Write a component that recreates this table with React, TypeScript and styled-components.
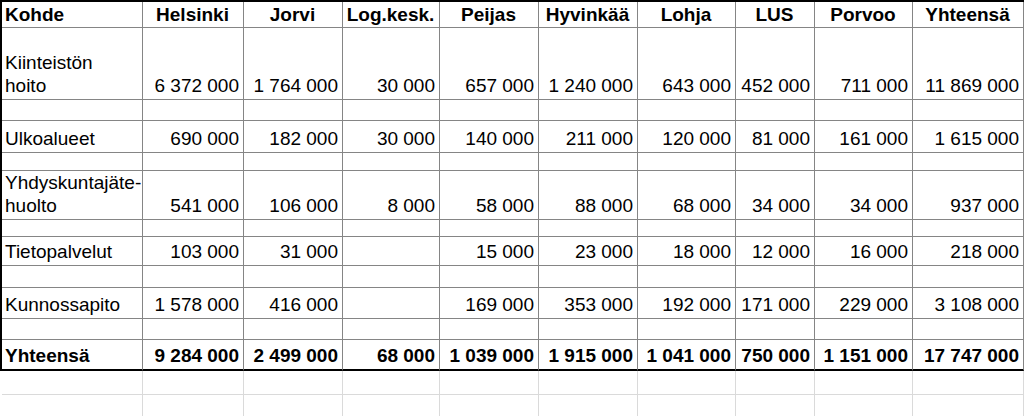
import React from 'react';
import styled, { createGlobalStyle } from 'styled-components';

const GlobalStyle = createGlobalStyle`
  html, body {
    margin: 0;
    padding: 0;
    background: #fff;
  }
  body {
    font-family: "Liberation Sans", Arial, sans-serif;
    color: #000;
  }
`;

// column widths, measured between the grid lines of the sheet
const COLS = '141px 101px 99px 97px 99px 99px 98px 79px 98px 111px';

const Page = styled.div`
  width: 1024px;
  height: 416px;
  overflow: hidden;
`;

const Sheet = styled.div`
  border-top: 2px solid #000;
  border-left: 2px solid #000;
`;

const Below = styled.div`
  padding-left: 2px;
`;

const Row = styled.div<{ $h: number; $total?: boolean; $faint?: boolean }>`
  display: grid;
  grid-template-columns: ${COLS};
  height: ${(p) => p.$h}px;
  font-weight: ${(p) => (p.$total ? 700 : 400)};
  & > div {
    border-bottom: ${(p) =>
      p.$total ? '2px solid #000' : p.$faint ? '1px solid #dadada' : '1px solid #858585'};
    border-right: 1px solid ${(p) => (p.$faint ? '#dadada' : '#858585')};
  }
`;

const Cell = styled.div<{ $align?: 'left' | 'right' | 'center' }>`
  box-sizing: border-box;
  display: flex;
  align-items: flex-end;
  justify-content: ${(p) =>
    p.$align === 'right' ? 'flex-end' : p.$align === 'center' ? 'center' : 'flex-start'};
  text-align: ${(p) => p.$align || 'left'};
  padding: 0 4px 2px 3px;
  font-size: 19px;
  line-height: 23px;
  white-space: pre;
  overflow: visible;
`;

const HeadCell = styled(Cell)`
  font-weight: 700;
  padding-bottom: 1px;
`;

const headers = ['Kohde', 'Helsinki', 'Jorvi', 'Log.kesk.', 'Peijas', 'Hyvinkää', 'Lohja', 'LUS', 'Porvoo', 'Yhteensä'];

const rows: { label: string; values: string[]; h: number; spacer: number }[] = [
  {
    label: 'Kiinteistön\nhoito',
    values: ['6 372 000', '1 764 000', '30 000', '657 000', '1 240 000', '643 000', '452 000', '711 000', '11 869 000'],
    h: 72,
    spacer: 21,
  },
  {
    label: 'Ulkoalueet',
    values: ['690 000', '182 000', '30 000', '140 000', '211 000', '120 000', '81 000', '161 000', '1 615 000'],
    h: 32,
    spacer: 18,
  },
  {
    label: 'Yhdyskuntajäte-\nhuolto',
    values: ['541 000', '106 000', '8 000', '58 000', '88 000', '68 000', '34 000', '34 000', '937 000'],
    h: 48,
    spacer: 18,
  },
  {
    label: 'Tietopalvelut',
    values: ['103 000', '31 000', '', '15 000', '23 000', '18 000', '12 000', '16 000', '218 000'],
    h: 29,
    spacer: 22,
  },
  {
    label: 'Kunnossapito',
    values: ['1 578 000', '416 000', '', '169 000', '353 000', '192 000', '171 000', '229 000', '3 108 000'],
    h: 31,
    spacer: 21,
  },
];

const total = ['9 284 000', '2 499 000', '68 000', '1 039 000', '1 915 000', '1 041 000', '750 000', '1 151 000', '17 747 000'];

const EmptyCells = () => (
  <>
    {headers.map((h) => (
      <Cell key={h} />
    ))}
  </>
);

const App: React.FC = () => {
  return (
    <Page>
      <GlobalStyle />
      <Sheet>
        <Row $h={26}>
          {headers.map((h, i) => (
            <HeadCell key={h} $align={i === 0 ? 'left' : 'center'}>
              {h}
            </HeadCell>
          ))}
        </Row>
        {rows.map((r) => (
          <React.Fragment key={r.label}>
            <Row $h={r.h}>
              <Cell>{r.label}</Cell>
              {r.values.map((v, i) => (
                <Cell key={i} $align="right">
                  {v}
                </Cell>
              ))}
            </Row>
            <Row $h={r.spacer}>
              <EmptyCells />
            </Row>
          </React.Fragment>
        ))}
        <Row $h={31} $total>
          <Cell>Yhteensä</Cell>
          {total.map((v, i) => (
            <Cell key={i} $align="right">
              {v}
            </Cell>
          ))}
        </Row>
      </Sheet>
      <Below>
        <Row $h={24} $faint>
          <EmptyCells />
        </Row>
        <Row $h={24} $faint>
          <EmptyCells />
        </Row>
      </Below>
    </Page>
  );
};

export default App;
